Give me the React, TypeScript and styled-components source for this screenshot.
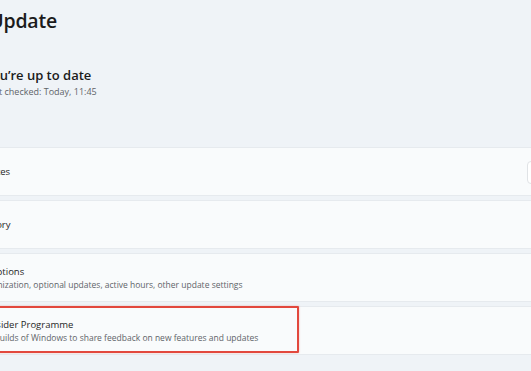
import React from 'react';
import styled, { createGlobalStyle } from 'styled-components';

const GlobalStyle = createGlobalStyle`
  html, body {
    margin: 0;
    padding: 0;
    width: 531px;
    height: 371px;
    overflow: hidden;
    background: #eff3f7;
  }
  body {
    font-family: "Open Sans", "Noto Sans", sans-serif;
    color: #1b1b1b;
  }
`;

const Page = styled.div`
  margin-left: -100px;
  width: 720px;
  padding-top: 7px;
`;

const Title = styled.h1`
  margin: 0;
  font-size: 19.5px;
  font-weight: 600;
  line-height: 28px;
  letter-spacing: -0.2px;
`;

const Status = styled.div`
  display: flex;
  align-items: center;
  gap: 26px;
  margin-top: 23px;
  padding-left: 10px;
`;

const StatusIcon = styled.div`
  width: 48px;
  height: 48px;
  border-radius: 50%;
  background: #dfe6ee;
`;

const StatusText = styled.div`
  display: flex;
  flex-direction: column;
  gap: 2px;
`;

const Headline = styled.div`
  font-size: 13px;
  font-weight: 600;
  line-height: 18px;
`;

const Caption = styled.div`
  font-size: 9px;
  line-height: 12px;
  color: #5f6469;
  padding-left: 1px;
`;

const List = styled.div`
  display: flex;
  flex-direction: column;
  gap: 4px;
  margin-top: 41px;
`;

const Card = styled.div`
  position: relative;
  display: flex;
  align-items: center;
  height: 49px;
  padding-left: 44px;
  background: #f9fbfc;
  border: 1px solid #e6eaee;
  border-radius: 4px;
  box-sizing: border-box;
`;

const CardText = styled.div`
  display: flex;
  flex-direction: column;
  gap: 1px;
`;

const CardTitle = styled.div`
  font-size: 9.5px;
  line-height: 13px;
  color: #1f1f1f;
`;

const CardDesc = styled.div`
  font-size: 8.5px;
  line-height: 11px;
  color: #5f6469;
`;

const DropButton = styled.div`
  position: absolute;
  left: 626px;
  top: 13px;
  width: 80px;
  height: 21px;
  background: #ffffff;
  border: 1px solid #e0e3e6;
  border-radius: 4px;
`;

const Highlight = styled.div`
  position: absolute;
  left: -10px;
  top: -1px;
  width: 408px;
  height: 47px;
  box-sizing: border-box;
  border: 2.5px solid #e2483d;
  border-radius: 1px;
  box-shadow: 0 0 2px rgba(226, 72, 61, 0.4);
  pointer-events: none;
`;

export default function App() {
  return (
    <>
      <GlobalStyle />
      <Page>
        <Title>Windows Update</Title>
        <Status>
          <StatusIcon />
          <StatusText>
            <Headline>You’re up to date</Headline>
            <Caption>Last checked: Today, 11:45</Caption>
          </StatusText>
        </Status>
        <List>
          <Card>
            <CardText>
              <CardTitle>Pause updates</CardTitle>
            </CardText>
            <DropButton />
          </Card>
          <Card>
            <CardText>
              <CardTitle>Update history</CardTitle>
            </CardText>
          </Card>
          <Card>
            <CardText>
              <CardTitle>Advanced options</CardTitle>
              <CardDesc>Delivery optimization, optional updates, active hours, other update settings</CardDesc>
            </CardText>
          </Card>
          <Card>
            <CardText>
              <CardTitle>Windows Insider Programme</CardTitle>
              <CardDesc>Get preview builds of Windows to share feedback on new features and updates</CardDesc>
            </CardText>
            <Highlight />
          </Card>
        </List>
      </Page>
    </>
  );
}
